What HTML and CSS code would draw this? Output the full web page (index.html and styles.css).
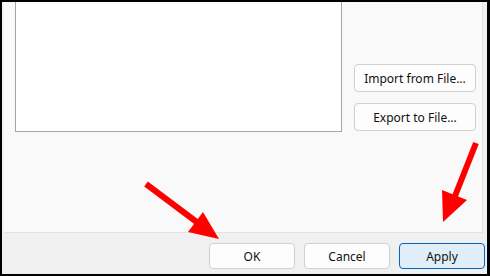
FILE: index.html
```html
<!DOCTYPE html>
<html lang="en">
<head>
	<meta charset="UTF-8">
	<title>Import / Export</title>
	<link rel="stylesheet" href="styles.css">
</head>
<body>
	<div class="frame">
		<div class="page">
			<div class="listbox"></div>
			<div class="side">
				<button class="btn wide">Import from File...</button>
				<button class="btn wide">Export to File...</button>
			</div>
		</div>
		<div class="footer">
			<button class="btn">OK</button>
			<button class="btn">Cancel</button>
			<button class="btn primary">Apply</button>
		</div>
		<svg class="marks" width="490" height="276" viewBox="0 0 490 276">
			<line x1="146" y1="184" x2="198" y2="223" stroke="#ff0000" stroke-width="6"/>
			<polygon points="203,212 188,232 219,239" fill="#ff0000"/>
			<line x1="476" y1="143" x2="455" y2="196" stroke="#ff0000" stroke-width="6"/>
			<polygon points="442,190 467,200 443,222" fill="#ff0000"/>
		</svg>
	</div>
</body>
</html>
```

FILE: styles.css
```css
html, body{
	margin: 0;
	padding: 0;
	background: #000;
}
.frame{
	position: relative;
	width: 485px;
	height: 272px;
	border: 2px solid #000;
	border-right-width: 3px;
	background: #f0f0f0;
	display: flex;
	flex-direction: column;
	font-family: "Noto Sans", "Open Sans", sans-serif;
	font-size: 12px;
	color: #111;
}
.page{
	margin-left: 2px;
	margin-right: 4px;
	height: 230px;
	background: #f9f9f9;
	border: 1px solid #e3e3e3;
	border-top: none;
	border-left-color: #fdfdfd;
	display: flex;
	align-items: flex-start;
	padding-left: 10px;
	gap: 12px;
}
.listbox{
	width: 325px;
	height: 129px;
	background: #fff;
	border: 1px solid #a5a5a5;
	border-top: none;
}
.side{
	height: 129px;
	display: flex;
	flex-direction: column;
	justify-content: flex-end;
	gap: 11px;
}
.btn{
	box-sizing: border-box;
	width: 86px;
	height: 26px;
	padding: 0;
	background: #fdfdfd;
	border: 1px solid #d0d0d0;
	border-radius: 4px;
	font: inherit;
	color: #111;
}
.btn.wide{
	width: 122px;
	height: 28px;
}
.btn.primary{
	background: #e0eefa;
	border-color: #0067c0;
}
.footer{
	flex: 1;
	display: flex;
	justify-content: flex-end;
	align-items: flex-start;
	padding-top: 10px;
	padding-right: 2px;
	gap: 9px;
}
.marks{
	position: absolute;
	left: -2px;
	top: -2px;
	pointer-events: none;
}
```
